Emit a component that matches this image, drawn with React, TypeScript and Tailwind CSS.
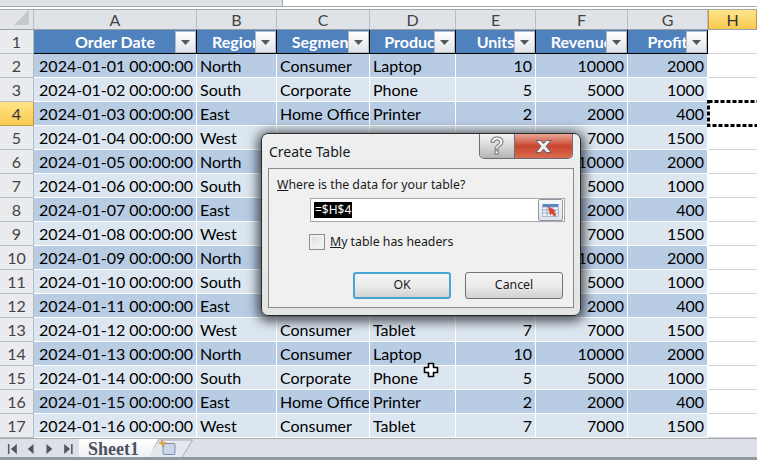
const rows = [
  ["2024-01-01 00:00:00", "North", "Consumer", "Laptop", 10, 10000, 2000],
  ["2024-01-02 00:00:00", "South", "Corporate", "Phone", 5, 5000, 1000],
  ["2024-01-03 00:00:00", "East", "Home Office", "Printer", 2, 2000, 400],
  ["2024-01-04 00:00:00", "West", "Consumer", "Tablet", 7, 7000, 1500],
  ["2024-01-05 00:00:00", "North", "Consumer", "Laptop", 10, 10000, 2000],
  ["2024-01-06 00:00:00", "South", "Corporate", "Phone", 5, 5000, 1000],
  ["2024-01-07 00:00:00", "East", "Home Office", "Printer", 2, 2000, 400],
  ["2024-01-08 00:00:00", "West", "Consumer", "Tablet", 7, 7000, 1500],
  ["2024-01-09 00:00:00", "North", "Consumer", "Laptop", 10, 10000, 2000],
  ["2024-01-10 00:00:00", "South", "Corporate", "Phone", 5, 5000, 1000],
  ["2024-01-11 00:00:00", "East", "Home Office", "Printer", 2, 2000, 400],
  ["2024-01-12 00:00:00", "West", "Consumer", "Tablet", 7, 7000, 1500],
  ["2024-01-13 00:00:00", "North", "Consumer", "Laptop", 10, 10000, 2000],
  ["2024-01-14 00:00:00", "South", "Corporate", "Phone", 5, 5000, 1000],
  ["2024-01-15 00:00:00", "East", "Home Office", "Printer", 2, 2000, 400],
  ["2024-01-16 00:00:00", "West", "Consumer", "Tablet", 7, 7000, 1500],
];

const headers = ["Order Date", "Region", "Segment", "Product", "Units", "Revenue", "Profit"];
const letters = ["A", "B", "C", "D", "E", "F", "G"];
const gridCols = "grid grid-cols-[34px_163px_80px_93px_86px_80px_92px_80px_1fr]";

function FilterButton() {
  return (
    <div className="absolute right-0 top-[1px] flex h-[22px] w-[21px] items-center justify-center border border-[#b4bac4] bg-gradient-to-b from-white to-[#dfe3ea]">
      <svg width="9" height="5" viewBox="0 0 9 5">
        <path d="M0 0h9L4.5 5z" fill="#555" />
      </svg>
    </div>
  );
}

function RowHeader({ n, active }: { n: number; active?: boolean }) {
  return (
    <div
      className={
        active
          ? "flex items-center justify-center border-r border-b border-[#c29b3e] bg-gradient-to-b from-[#ffe587] to-[#f8c94f] pt-[1px] text-[#333]"
          : "flex items-center justify-center border-r border-b border-[#b8bcc2] bg-[#e9ebee] pt-[1px] text-[#444]"
      }
    >
      {n}
    </div>
  );
}

function NavArrows() {
  return (
    <svg width="78" height="12" viewBox="0 0 78 12" fill="#555" className="ml-[2px]">
      <path d="M6 1h1.5v10H6zM15 1v10L9 6z" />
      <path d="M32 1v10l-6-5z" />
      <path d="M45 1l6 5-6 5z" />
      <path d="M63 1l6 5-6 5zM70 1h1.5v10H70z" />
    </svg>
  );
}

export default function App() {
  return (
    <div className="relative flex h-[460px] w-[757px] flex-col overflow-hidden bg-white font-['Lato','Carlito',sans-serif] text-[16px] leading-none text-black">
      {/* formula bar remains */}
      <div className="flex h-[6px]">
        <div className="w-[283px] border-r border-[#a8a8a8] bg-[#dfe3e8]" />
        <div className="flex-1" />
      </div>
      <div className="h-[4px] border-y border-[#a5a9b0] bg-white" />

      {/* column letters */}
      <div className={`${gridCols} h-[20px] border-b border-[#9aa0a8] text-[#444]`}>
        <div className="flex items-end justify-end border-r border-[#b8bcc2] bg-[#e2e4e7] pr-[4px] pb-[4px]">
          <svg width="15" height="15" viewBox="0 0 15 15">
            <path d="M15 0v15H0z" fill="#c4c8cc" />
          </svg>
        </div>
        {letters.map((l) => (
          <div key={l} className="flex items-center justify-center border-r border-[#b8bcc2] bg-[#dfe3e8]">
            {l}
          </div>
        ))}
        <div className="flex items-center justify-center border-x border-[#c29b3e] bg-gradient-to-b from-[#ffe587] to-[#f8c94f] text-[#333]">
          H
        </div>
      </div>

      {/* table header row */}
      <div className={`${gridCols} h-[24px]`}>
        <RowHeader n={1} />
        {headers.map((h) => (
          <div
            key={h}
            className="relative flex items-center justify-center overflow-hidden border-r border-b border-black bg-[#4f81bd] pt-[1px] font-bold whitespace-nowrap text-white"
          >
            {h}
            <FilterButton />
          </div>
        ))}
        <div className="border-b border-[#d4d4d4]" />
      </div>

      {/* data rows */}
      {rows.map((r, i) => (
        <div key={i} className={`${gridCols} h-[24px]`}>
          <RowHeader n={i + 2} active={i === 2} />
          {r.map((v, j) => (
            <div
              key={j}
              className={`flex items-center overflow-hidden border-r border-b border-white pt-[1px] whitespace-nowrap ${
                i % 2 === 0 ? "bg-[#b8cce4]" : "bg-[#dce6f1]"
              } ${j === 0 || j > 3 ? "justify-end pr-[3px]" : "pl-[3px]"}`}
            >
              {v}
            </div>
          ))}
          <div className="relative border-b border-[#d4d4d4]">
            {i === 2 && (
              <svg width="51" height="27" viewBox="0 0 51 27" fill="none" className="absolute -left-px -top-[2px]">
                <rect x="1.5" y="1.5" width="52" height="24" stroke="white" strokeWidth="3" />
                <rect x="1.5" y="1.5" width="52" height="24" stroke="black" strokeWidth="3" strokeDasharray="4 2" />
              </svg>
            )}
          </div>
        </div>
      ))}

      {/* sheet tabs */}
      <div className="flex h-[22px] border-t border-[#a5a9b0] bg-[#dce0e8]">
        <div className="flex h-[19px] w-[79px] items-center">
          <NavArrows />
        </div>
        <div className="flex h-[19px] w-[79px] items-center bg-gradient-to-b from-white to-[#eef0f4] pl-[9px] font-['Liberation_Serif',serif] text-[18px] font-bold text-[#4c5360] [clip-path:polygon(0_0,100%_0,88%_100%,0_100%)]">
          Sheet1
        </div>
        <svg width="46" height="19" viewBox="0 0 46 19" className="-ml-[11px]">
          <path d="M0.5 18.5L11.5 1H45.5L35 18.5z" fill="#e4e7ed" stroke="#a9aeb6" />
          <rect x="16" y="4.5" width="12" height="11" rx="1" fill="#c9d6ea" stroke="#7f8fa8" />
          <path d="M15 1l1.2 2.3L19 4l-2.3 1.2L16 8l-1-2.6L12 4l2.7-.7z" fill="#f2b134" stroke="#b8741a" strokeWidth=".5" />
        </svg>
      </div>
      <div className="absolute inset-x-0 bottom-0 h-[3px] bg-[#9098a2]" />

      {/* mouse cursor */}
      <svg width="16" height="16" viewBox="0 0 16 16" className="absolute left-[423px] top-[362px]">
        <path
          d="M5.5 1.5h5v4h4v5h-4v4h-5v-4h-4v-5h4z"
          fill="white"
          stroke="black"
          strokeWidth="1.6"
          strokeLinejoin="round"
        />
      </svg>

      {/* Create Table dialog */}
      <div className="absolute left-[261px] top-[133px] flex h-[183px] w-[320px] flex-col rounded-[7px] border border-[#2a2a2a] bg-gradient-to-b from-[#eeeff0] to-[#e4e4e4] px-[6px] pb-[7px] shadow-[0_2px_12px_3px_rgba(0,0,0,0.7)]">
        <div className="flex h-[34px] shrink-0 items-start">
          <div className="pt-[11px] pl-[1px] font-['Noto_Sans',sans-serif] text-[14px] text-[#1a1a1a]">Create Table</div>
          <div className="mr-[1px] ml-auto flex h-[25px] w-[94px] overflow-hidden rounded-b-[5px] border border-t-0 border-[#6d6d6d]">
            <div className="flex w-[35px] items-center justify-center border-r border-[#6d6d6d] bg-gradient-to-b from-[#f2f2f2] via-[#d8d8d8] to-[#b4b4b4] font-['Liberation_Sans',sans-serif] text-[23px] font-bold text-white [-webkit-text-stroke:1px_#777]">
              ?
            </div>
            <div className="flex flex-1 items-center justify-center bg-gradient-to-b from-[#e8a598] via-[#c9452f] to-[#d96a4e]">
              <svg width="19" height="15" viewBox="0 0 19 15">
                <path
                  d="M2 1.5h4.5l3 3.2 3-3.2H17l-5 5.8 5 6.2h-4.5l-3-3.4-3 3.4H2l5-6.2z"
                  fill="#f0f0f4"
                  stroke="#555c70"
                  strokeWidth="0.9"
                />
              </svg>
            </div>
          </div>
        </div>

        <div className="flex flex-1 flex-col border border-[#8a8a8a] bg-[#f0f0f0] font-['Noto_Sans',sans-serif] text-[12.3px] text-[#1a1a1a]">
          <div className="pt-[7px] pl-[8px] leading-[18px]">
            <span className="underline">W</span>here is the data for your table?
          </div>
          <div className="mt-[4px] ml-[41px] flex h-[24px] w-[255px] items-center justify-between border border-[#a8a8a8] bg-white pr-[1px] pl-[3px]">
            <span className="bg-black px-[1px] py-[2px] text-[12px] text-white">=$H$4</span>
            <div className="flex h-[22px] w-[25px] items-center justify-center rounded-[2px] border border-[#8f98a3] bg-gradient-to-b from-[#f8f8f8] to-[#dfe3e8]">
              <svg width="17" height="14" viewBox="0 0 17 14">
                <rect x="0.5" y="1" width="16" height="3" fill="#5a86c2" />
                <rect x="0.5" y="4" width="16" height="9.5" fill="#f4f7fb" stroke="#7e9ac2" strokeWidth="0.6" />
                <path d="M0.5 7h16M0.5 10h16M5 4v9.5M11 4v9.5" stroke="#7e9ac2" strokeWidth="0.8" />
                <path d="M6 3l8 5-2 1 2.5 3-2 1.5-2.5-3-2 2z" fill="#d8442c" />
              </svg>
            </div>
          </div>
          <label className="mt-[12px] ml-[40px] flex items-center gap-[5px]">
            <span className="h-[16px] w-[16px] border border-[#8e8e8e] bg-gradient-to-br from-[#dcdcdc] to-[#fafafa] shadow-[inset_0_0_0_2px_#f0f0f0]" />
            <span>
              <span className="underline">M</span>y table has headers
            </span>
          </label>
          <div className="mt-[22px] ml-[84px] flex gap-[14px]">
            <div className="flex h-[27px] w-[98px] items-center justify-center rounded-[3px] border-2 border-[#46a5d4] bg-gradient-to-b from-[#f3f3f3] via-[#ececec] to-[#d2d2d2]">
              OK
            </div>
            <div className="flex h-[27px] w-[98px] items-center justify-center rounded-[3px] border border-[#707070] bg-gradient-to-b from-[#f3f3f3] via-[#ececec] to-[#d2d2d2]">
              Cancel
            </div>
          </div>
        </div>
      </div>
    </div>
  );
}
